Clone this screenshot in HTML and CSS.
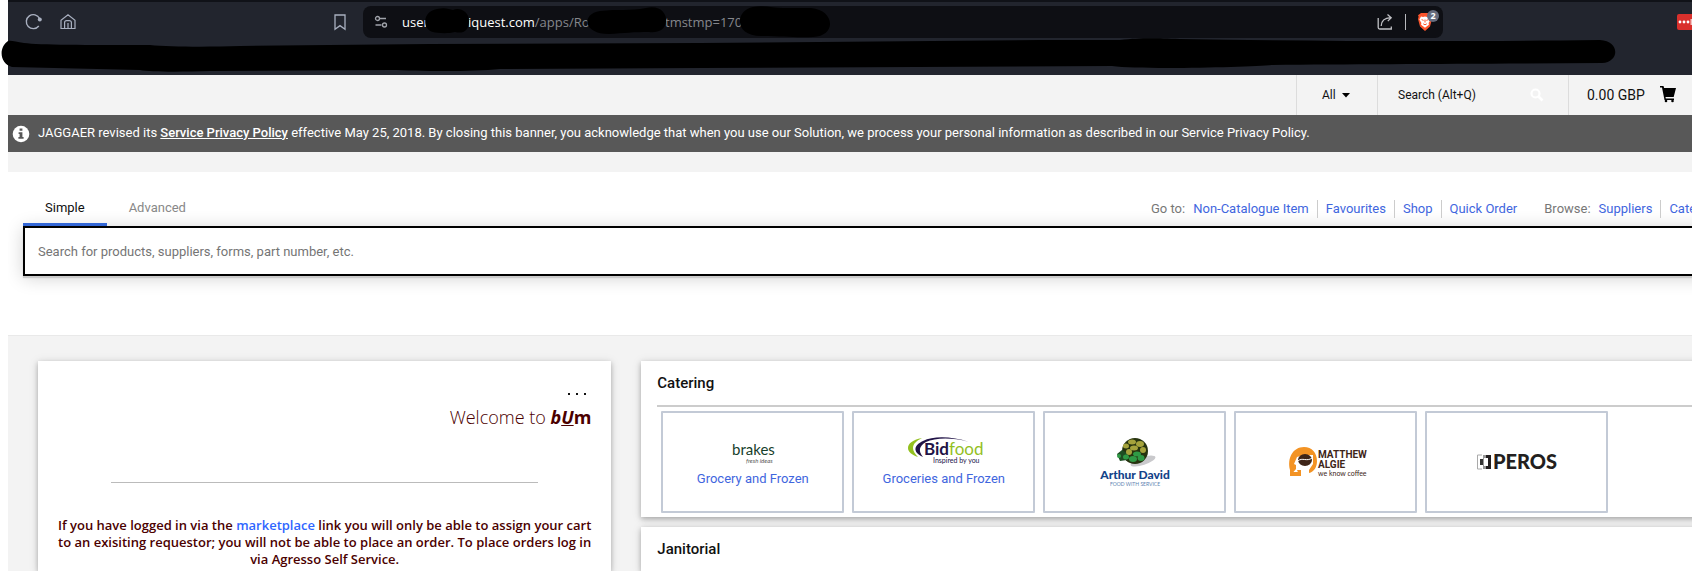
FILE: index.html
```html
<!DOCTYPE html>
<html lang="en">
<head>
<meta charset="utf-8">
<title>Marketplace</title>
<link rel="stylesheet" href="styles.css">
</head>
<body>
<div class="chrome">
  <div class="toolbar">
    <div class="tools">
      <button class="icon-btn" aria-label="Reload"><svg width="18" height="18" viewBox="0 0 18 18"><path d="M14.6 5.5A7 7 0 1 0 13.8 13" fill="none" stroke="#a9b0c0" stroke-width="1.4"/><circle cx="14.8" cy="6.4" r="2" fill="#a9b0c0"/></svg></button>
      <button class="icon-btn" aria-label="Home"><svg width="18" height="18" viewBox="0 0 18 18"><path d="M2 15.5V7.2L9 1.7l7 5.5v8.3h-3.6V9.6a2 2 0 0 0-2-2H7.6a2 2 0 0 0-2 2v5.9zM9 10v5.500M5.600 15.500h6.800" fill="none" stroke="#a9b0c0" stroke-width="1.2"/></svg></button>
    </div>
    <button class="icon-btn" aria-label="Bookmark"><svg width="14" height="18" viewBox="0 0 14 18"><path d="M2 2h10v14.2l-5-3.6-5 3.6z" fill="none" stroke="#a9b0c0" stroke-width="1.3"/></svg></button>
    <div class="address">
      <svg width="14" height="14" viewBox="0 0 14 14"><g fill="none" stroke="#a0a3aa" stroke-width="1.3"><circle cx="3.5" cy="3.5" r="2"/><path d="M6 3.5h6M1.5 10h6"/><circle cx="10.5" cy="10" r="2"/></g></svg>
      <div class="url"><span class="part host">user</span><span class="part host host-end">iquest.com<span class="path">/apps/Ro</span></span><span class="part path">tmstmp=170</span></div>
      <button class="icon-btn" aria-label="Share"><svg width="18" height="18" viewBox="0 0 18 18"><path d="M2.2 5v9.5a1.5 1.5 0 0 0 1.500 1.500h11.600v-2.600M5.200 13c.2-5 3-8 9.500-8.300M11.500 1.500l3.700 3.200-3.400 3.400" fill="none" stroke="#c0c1c5" stroke-width="1.300"/></svg></button>
      <span class="rule"></span>
      <button class="icon-btn" aria-label="Shields, 2 blocked"><svg width="16" height="18" viewBox="0 0 16 18"><path d="M4 0h8l3 2.200-.6 1.500.6 2.300-2 7.500L8 18l-5-4.500L1 6l.6-2.300L1 2.200z" fill="#fb542b"/><path d="M4 3.500l2 .6 2-.6 2 .6 2-.6 1.600 3-2 3.400.3 1.800L8 14.800l-3.900-3.100.3-1.800-2-3.400z" fill="#fff"/><path d="M4.600 6.600l2 .8M11.400 6.600l-2 .8M8 6.500v3M6.200 10.800L8 11.800l1.800-1" stroke="#fb542b" stroke-width="1" fill="none"/></svg><span class="badge">2</span></button>
    </div>
    <button class="extension" aria-label="Passwords"><svg width="15" height="16" viewBox="0 0 15 16"><g fill="#fff"><circle cx="3" cy="8" r="1.400"/><circle cx="7" cy="8" r="1.400"/><circle cx="11" cy="8" r="1.400"/><path d="M13.500 5h1.500v6h-1.500z" opacity=".7"/></g></svg></button>
  </div>
  <svg class="marks" width="1692" height="75" viewBox="0 0 1692 75" aria-hidden="true">
    <path d="M8 41c3-1 8 1 16 2 16 2 60 2 126 2 20 2 60 2 90 1L430 44 700 43 1040 40l80 0c20-2 30-2 60-1 130 2 260 3 420 1 20 1 20 22 2 23-120 1-240 1-330 2-20 2-130 5-160 1L700 68 500 69c-30 3-80 2-110 1L210 71c-30 1-60 1-70-1L12 67C0 64-2 48 8 41z"/>
    <path d="M437 9c8-2 12 0 16 1 6-3 16 1 16 11s-6 13-14 11c-8 2-18 1-22 0-10-2-12-20 4-23z"/>
    <path d="M600 11c18-2 30 0 46-3 14-3 21 5 20 14-1 8-8 11-17 10-15 0-25 1-40 2-26 0-28-20-9-23z"/>
    <path d="M753 7c10-2 20 1 30 1h28c24 2 26 28 2 29-18 1-30-1-50-1-30 1-28-26-10-29z"/>
  </svg>
</div>

<div class="site">
  <header class="header">
    <button class="cell scope">All <svg width="8" height="5" viewBox="0 0 8 5"><path d="M0 0h8L4 4.500z"/></svg></button>
    <label class="cell quick"><input type="text" placeholder="Search (Alt+Q)" aria-label="Quick search"><svg width="14" height="14" viewBox="0 0 14 14"><circle cx="5.500" cy="5.500" r="4" fill="none" stroke="#fff" stroke-width="2.200"/><path d="M8.500 8.500l4 4" stroke="#fff" stroke-width="2.600"/></svg></label>
    <a class="cell cart" href="#">0.00 GBP <svg width="18" height="18" viewBox="0 0 18 18"><path d="M1 0h3.500l.6 2H17l-2.300 9H6.500l.3 1.400H15V14H5.500L3 1.600H1z"/><circle cx="7" cy="15" r="1.300"/><circle cx="13.500" cy="15" r="1.300"/></svg></a>
  </header>

  <div class="banner">
    <svg width="18" height="18" viewBox="0 0 18 18"><circle cx="9" cy="9" r="8.300" fill="#fff"/><path d="M7.600 3.500h2.800v2.300H7.600zM6.600 7.200h3.800v4.700h1.200v1.800H6.400v-1.800h1.200V9h-1z" fill="#585858"/></svg>
    <p>JAGGAER revised its <a href="#">Service Privacy Policy</a> effective May 25, 2018. By closing this banner, you acknowledge that when you use our Solution, we process your personal information as described in our Service Privacy Policy.</p>
  </div>

  <section class="search">
    <div class="search-top">
      <div class="tabs"><button class="tab active">Simple</button><button class="tab">Advanced</button></div>
      <nav class="links">
        <span>Go to:</span><a href="#">Non-Catalogue Item</a><a href="#">Favourites</a><a href="#">Shop</a><a href="#">Quick Order</a>
        <span class="browse">Browse:</span><a href="#">Suppliers</a><a href="#">Categories</a>
      </nav>
    </div>
    <input class="product-search" type="text" placeholder="Search for products, suppliers, forms, part number, etc." aria-label="Product search">
  </section>

  <main class="main">
    <section class="card welcome">
      <button class="more" aria-label="More options"><svg width="20" height="6" viewBox="0 0 20 6"><path d="M1 2h2v2H1zM9 2h2v2H9zM17 2h2v2h-2z"/></svg></button>
      <h1>Welcome to <b><i>b<u>U</u></i>m</b></h1>
      <hr>
      <p>If you have logged in via the <a href="#">marketplace</a> link you will only be able to assign your cart<br>to an exisiting requestor; you will not be able to place an order. To place orders log in<br>via Agresso Self Service.</p>
    </section>

    <div class="groups">
      <section class="card group">
        <h2>Catering</h2>
        <div class="tiles">
          <a class="tile" href="#">
            <svg width="76" height="30" viewBox="0 0 76 30"><text x="17" y="19" class="logo brakes">brakes</text><text x="31" y="27" class="logo brakes-sub">fresh ideas</text></svg>
            <span>Grocery and Frozen</span>
          </a>
          <a class="tile" href="#">
            <svg width="76" height="30" viewBox="0 0 76 30"><path d="M16 2C6 4 2 8 2 12c0 4 4 7 10 9-3-3-5-6-5-9 0-4 3-7 9-10z" fill="#93c01f"/><path d="M63 6C45 0 27 0 17 5 8 9 6 16 17 21c-5-6-4-11 3-15 9-4 25-5 43 0z" fill="#211347"/><text x="18" y="19" class="logo bid">Bid<tspan class="food">food</tspan></text><text x="27" y="27" class="logo bid-sub">Inspired by you</text></svg>
            <span>Groceries and Frozen</span>
          </a>
          <a class="tile" href="#">
            <svg width="76" height="52" viewBox="0 0 76 52"><ellipse cx="46" cy="25" rx="13" ry="4" fill="#c9c9cc" transform="rotate(-18 46 25)"/><circle cx="38" cy="15" r="13" fill="#26330f"/><path d="M20 18l5-4 5 3v7l-7 1z" fill="#1d4d22"/><g fill="#a5a33c"><ellipse cx="35" cy="6" rx="4" ry="2.500"/><ellipse cx="43" cy="8" rx="4" ry="3"/><ellipse cx="29" cy="10" rx="3" ry="2.500"/><ellipse cx="37" cy="12" rx="4" ry="2.500"/><ellipse cx="46" cy="14" rx="3" ry="3"/><ellipse cx="32" cy="16" rx="3" ry="3"/></g><g fill="#2f9a45"><ellipse cx="40" cy="18" rx="4" ry="2.500"/><ellipse cx="29" cy="21" rx="3" ry="2.500"/><ellipse cx="36" cy="23" rx="4" ry="3"/><ellipse cx="44" cy="22" rx="3.500" ry="3"/><circle cx="22" cy="20" r="2"/></g><text x="38" y="43" text-anchor="middle" class="logo arthur">Arthur David</text><text x="38" y="50" text-anchor="middle" class="logo arthur-sub">FOOD WITH SERVICE</text></svg>
          </a>
          <a class="tile" href="#">
            <svg width="76" height="32" viewBox="0 0 76 32"><path d="M2 30V24C-1 12 5 1 16 1c8 0 13 6 13 14 0 6-3 11-8 12v3h-7v-3c-3 1-5-1-5-4l-2-1 2-6c0-5 3-7 8-7h3z" fill="#f39324"/><path d="M9 11l-3 7 2 1v5h5v6h8v-6l4-6V9h-9z" fill="#fff"/><path d="M2 26h11v4H2z" fill="#f39324"/><ellipse cx="17" cy="14" rx="7" ry="6" fill="#3e2518"/><path d="M10 15c4-4 9 1 14-3" stroke="#fff" fill="none"/><text x="30" y="12" class="logo matthew">MATTHEW</text><text x="30" y="22" class="logo matthew">ALGIE</text><text x="30" y="30" class="logo matthew-sub">we know coffee</text></svg>
          </a>
          <a class="tile" href="#">
            <svg width="82" height="24" viewBox="0 0 82 24"><path d="M6 5H1.500v14H6" fill="none" stroke="#aaa"/><path d="M4 9h4v6H4z" fill="#333"/><path d="M7 5h3v3H8v8h2v3H7z" fill="#999"/><path d="M10 5h5v14h-5v-3h2V8h-2z" fill="#231f20"/><text x="17" y="19" class="logo peros">PEROS</text></svg>
          </a>
        </div>
      </section>
      <section class="card group"><h2>Janitorial</h2></section>
    </div>
  </main>
</div>
</body>
</html>
```
FILE: styles.css
```css
* { box-sizing: border-box; }
body { margin: 0; background: #fff; font: 13px/18px Roboto, "Liberation Sans", sans-serif; color: #111; }
button { border: 0; background: none; padding: 0; font: inherit; color: inherit; }
a { color: #3f66de; text-decoration: none; }
p, h1, h2 { margin: 0; }
svg { overflow: visible; }

.chrome { position: relative; margin-left: 8px; height: 75px; background: #22252e; border-top: 2px solid #101218; }
.toolbar { display: flex; align-items: center; padding: 4px 0; }
.tools { display: flex; gap: 16px; width: 325px; padding-left: 17px; }
.icon-btn { display: flex; position: relative; }
.address { display: flex; align-items: center; flex: 0 1 1080px; height: 32px; margin-left: 16px; padding: 0 10px 0 11px; border-radius: 8px; background: #0e0f14; }
.url { display: flex; flex: 1; padding-left: 14px; font: 13px/20px "Open Sans", "Noto Sans", sans-serif; white-space: nowrap; }
.part { width: 66px; }
.host { color: #fff; }
.host-end { width: 197px; }
.path { color: #85878c; }
.rule { width: 1px; height: 16px; margin: 0 11px; background: #b8b9bd; }
.badge { position: absolute; left: 10px; top: -3px; width: 12px; height: 12px; border-radius: 6px; background: #656b7d; color: #fff; font: bold 9px/12px "Open Sans", sans-serif; text-align: center; }
.extension { display: flex; margin-left: auto; background: #d9302c; border-radius: 2px 0 0 2px; }
.marks { position: absolute; left: -8px; top: -2px; }

.site { margin-left: 8px; background: #f3f3f3; overflow: hidden; }
.header { display: flex; justify-content: flex-end; height: 40px; }
.cell { display: flex; align-items: center; border-left: 1px solid #dcdcdc; color: #111; }
.scope { width: 81px; padding-left: 25px; gap: 6px; font-size: 12px; }
.quick { width: 191px; padding: 0 24px 0 20px; font-size: 12px; }
.quick input { flex: 1; min-width: 0; padding: 0; border: 0; background: none; font: inherit; }
.quick input::placeholder { color: #111; }
.cart { width: 124px; padding-left: 18px; gap: 14px; font-size: 14px; }

.banner { display: flex; align-items: center; gap: 8px; height: 37px; padding-left: 4px; background: #585858; color: #fff; white-space: nowrap; }
.banner p { padding-bottom: 2px; }
.banner a { color: #fff; font-weight: 500; text-decoration: underline; }

.search { margin-top: 20px; height: 164px; padding: 27px 0 0 15px; background: #fff; border-bottom: 1px solid #e9e9e9; }
.search-top { display: flex; justify-content: space-between; }
.tabs { display: flex; }
.tab { height: 27px; padding: 0 22px 6px; border-bottom: 3px solid transparent; color: #888; }
.tab.active { color: #111; border-color: #3367d6; }
.links { display: flex; flex: 0 0 541px; height: 18px; margin-top: 1px; overflow: hidden; white-space: nowrap; color: #777; }
.links span { margin-right: 8px; }
.links .browse { margin-left: 27px; }
.links a + a { margin-left: 8px; padding-left: 8px; border-left: 1px solid #ccc; }
.product-search { display: block; width: calc(100% + 24px); height: 50px; padding: 0 13px; border: 2px solid #000; border-radius: 0; background: #fff; font: inherit; box-shadow: 0 2px 1px #ccc, 0 2px 18px rgba(0,0,0,.18); }
.product-search::placeholder { color: #757575; }

.main { display: grid; grid-template-columns: 573fr 1075fr; gap: 30px; margin-right: -24px; padding: 25px 0 0 30px; }
.card { background: #fff; box-shadow: 0 2px 5px rgba(0,0,0,.26), 0 1px 10px rgba(0,0,0,.1); }
.welcome { padding: 30px 20px 0; color: #4b0000; text-align: center; font-family: "Open Sans", "Noto Sans", sans-serif; }
.more { display: flex; margin: 0 4px 0 auto; fill: #111; }
.welcome h1 { margin-top: 7px; font-size: 18px; line-height: 26px; font-weight: 300; text-align: right; }
.welcome h1 b { font-weight: 700; }
.welcome hr { width: 80%; margin: 52px auto 34px; border: 0; border-top: 1px solid #bbb; }
.welcome p { font-weight: 600; line-height: 17px; white-space: nowrap; }
.welcome p a { color: #2f66ff; }

.groups { display: grid; gap: 10px; align-content: start; }
.group { padding: 12px 0 0 16px; }
.group h2 { font-size: 15px; line-height: 20px; font-weight: 500; padding-bottom: 12px; }
.tiles { display: flex; gap: 8px; padding: 4px; border-top: 2px solid #ccc; }
.tile { display: flex; flex-direction: column; align-items: center; justify-content: center; gap: 4px; width: 183px; height: 102px; border: 2px solid #c3cad6; border-radius: 1px; }
.logo { font-family: Lato, "Open Sans", sans-serif; }
.brakes { font-size: 15px; fill: #17402c; }
.brakes-sub { font-size: 6px; font-style: italic; fill: #555; }
.bid { font-size: 17px; font-weight: 700; fill: #211347; }
.food { font-weight: 400; fill: #93c01f; }
.bid-sub { font-size: 7px; fill: #211347; }
.arthur { font-size: 12px; font-weight: 900; fill: #134389; }
.arthur-sub { font-size: 5px; fill: #5c82b0; }
.matthew { font-family: Roboto, sans-serif; font-size: 10px; font-weight: 700; fill: #3e2518; }
.matthew-sub { font-size: 7px; fill: #3e2518; }
.peros { font-size: 20px; font-weight: 900; fill: #231f20; }
```
